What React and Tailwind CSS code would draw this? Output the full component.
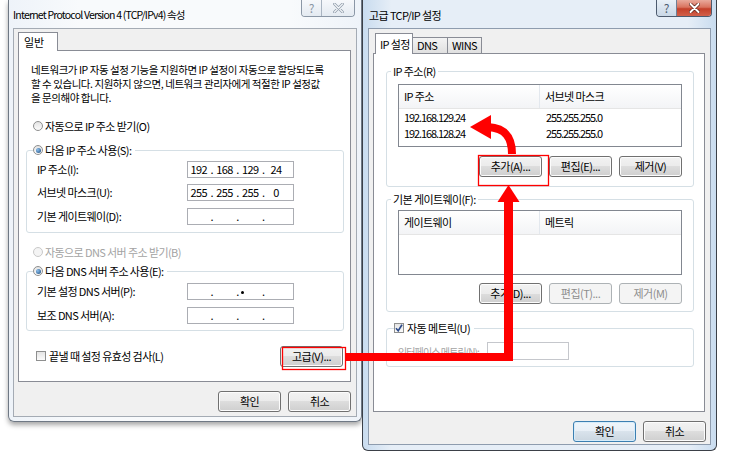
import React from 'react';
import clsx from 'clsx';

const FONT = "font-['Noto_Sans_CJK_KR','Noto_Sans',sans-serif]";

const Btn = ({ children, className, disabled, primary }) => (
  <div
    className={clsx(
      'flex h-[21px] w-[63px] shrink-0 items-center justify-center rounded-[3px] border text-[11px] tracking-[-0.5px]',
      disabled
        ? 'border-[#adb2b5] bg-[#f4f4f4] text-[#8d8d8d]'
        : primary
          ? 'border-[#3c7fb1] bg-[linear-gradient(#eef5fb_0%,#e8eff6_50%,#d9e3ec_50%,#cbd6e0_100%)] shadow-[inset_0_0_0_1px_#d6ecfa]'
          : 'border-[#707070] bg-[linear-gradient(#f2f2f2_0%,#ebebeb_50%,#dddddd_50%,#cfcfcf_100%)] shadow-[inset_0_0_0_1px_#fcfcfc]',
      className
    )}
  >
    {children}
  </div>
);

const Radio = ({ checked, disabled }) => (
  <span
    className={clsx(
      'flex h-[10px] w-[10px] shrink-0 items-center justify-center rounded-full border',
      disabled ? 'border-[#c9c9c9] bg-[#f4f4f4]' : 'border-[#8e8f8f] bg-[linear-gradient(#e4e4e4,#fbfbfb)]'
    )}
  >
    {checked && <span className="h-[5px] w-[5px] rounded-full bg-[radial-gradient(circle_at_35%_35%,#8cc0ee,#1b4a7c)]" />}
  </span>
);

const Check = ({ checked }) => (
  <span className="flex h-[10px] w-[10px] shrink-0 items-center justify-center border border-[#8e8f8f] bg-[linear-gradient(#e4e4e4,#fbfbfb)]">
    {checked && (
      <svg width="8" height="8" viewBox="0 0 8 8">
        <path d="M1 4.2 L3.2 6.8 L7 0.8" fill="none" stroke="#2b4a8a" strokeWidth="1.6" />
      </svg>
    )}
  </span>
);

const IpInput = ({ parts, caret }) => (
  <div className="flex h-[17px] w-[107px] items-center border border-[#abadb3] bg-white pr-[6px] text-[11px]">
    {parts.map((p, i) => (
      <React.Fragment key={i}>
        {i > 0 && (
          <span className="relative w-[4px] text-center">
            .
            {caret && i === 2 && <span className="absolute left-[5px] top-[8px] h-[3px] w-[3px] rounded-full bg-black" />}
          </span>
        )}
        <span className="flex-1 text-center">{p}</span>
      </React.Fragment>
    ))}
  </div>
);

const FieldRow = ({ label, parts, caret, className }) => (
  <div className={clsx('flex h-[17px] items-center pl-[10px]', className)}>
    <span className="w-[150px]">{label}</span>
    <IpInput parts={parts} caret={caret} />
  </div>
);

const CaptionButtons = ({ active, className }) => (
  <div className={clsx('flex h-[17px] overflow-hidden rounded-b-[4px] border border-t-0', active ? 'border-[#4c5a6e]' : 'border-[#8b97a6]', className)}>
    <div
      className={clsx(
        'flex w-[20px] items-center justify-center border-r text-[12px] leading-none',
        active ? 'border-[#6f7f95] bg-[linear-gradient(#e9f0f7,#c9d7e6)] text-[#4d5d72]' : 'border-[#a9b4c1] bg-[linear-gradient(#f6f8fb,#e4eaf1)] text-[#8a96a5]'
      )}
    >
      ?
    </div>
    <div
      className={clsx(
        'flex items-center justify-center',
        active ? 'w-[34px] bg-[linear-gradient(#e9a99b_0%,#d9735f_45%,#c4402a_55%,#d2604a_100%)]' : 'w-[32px] bg-[linear-gradient(#f6f8fb,#e4eaf1)]'
      )}
    >
      {active ? (
        <svg width="11" height="10" viewBox="0 0 11 10">
          <path d="M1.5 1 L9.5 9 M9.5 1 L1.5 9" stroke="#5a1f15" strokeWidth="3.4" strokeLinecap="round" />
          <path d="M1.5 1 L9.5 9 M9.5 1 L1.5 9" stroke="#ffffff" strokeWidth="2" strokeLinecap="round" />
        </svg>
      ) : (
        <svg width="11" height="10" viewBox="0 0 11 10">
          <path d="M1.5 1 L9.5 9 M9.5 1 L1.5 9" stroke="#8e9aa8" strokeWidth="2.6" strokeLinecap="round" />
          <path d="M1.5 1 L9.5 9 M9.5 1 L1.5 9" stroke="#f4f6f9" strokeWidth="1.2" strokeLinecap="round" />
        </svg>
      )}
    </div>
  </div>
);

const ListView = ({ cols, rows, className }) => (
  <div className={clsx('ml-[11px] w-[284px] border border-[#828790] bg-white', className)}>
    <div className="flex h-[24px] border-b border-[#e5e5e5] bg-[linear-gradient(#ffffff,#f3f4f6)]">
      <div className="flex w-[141px] items-center border-r border-[#e3e8ee] pl-[5px]">{cols[0]}</div>
      <div className="flex items-center pl-[5px]">{cols[1]}</div>
    </div>
    {rows.map((r) => (
      <div key={r[0]} className="flex h-[16px] items-center tracking-[-1.1px]">
        <div className="w-[142px] pl-[5px]">{r[0]}</div>
        <div className="pl-[5px]">{r[1]}</div>
      </div>
    ))}
  </div>
);

const LeftWindow = () => (
  <div className="flex h-[422px] w-[354px] shrink-0 flex-col rounded-b-[6px] border border-t-0 border-[#6f7884] bg-[linear-gradient(90deg,#eef3f9,#f8fafc_20%,#f8fafc_80%,#eef3f9)] shadow-[0_3px_5px_rgba(0,0,0,0.35)]">
    <div className="flex h-[28px] items-start">
      <span className="ml-[4px] mt-[8px] text-[10.5px] leading-[14px] tracking-[-0.8px]">Internet Protocol Version 4 (TCP/IPv4) 속성</span>
      <CaptionButtons className="ml-auto mr-[6px]" />
    </div>
    <div className="mx-[4px] mb-[4px] flex flex-1 flex-col border border-[#a4abb4] bg-[#f0f0f0] pl-[4px] pt-[3px]">
      <div className="flex">
        <div className="relative z-10 -mb-px flex h-[19px] w-[40px] items-center border border-b-0 border-[#898c95] bg-white pl-[5px] text-[11px]">
          일반
        </div>
      </div>
      <div className="flex h-[332px] w-[333px] flex-col border border-[#898c95] bg-white text-[11px] tracking-[-0.6px]">
        <div className="pl-[12px] pt-[12px] text-[10.5px] leading-[14px] tracking-[-0.45px]">
          <p>네트워크가 IP 자동 설정 기능을 지원하면 IP 설정이 자동으로 할당되도록</p>
          <p>할 수 있습니다. 지원하지 않으면, 네트워크 관리자에게 적절한 IP 설정값</p>
          <p>을 문의해야 합니다.</p>
        </div>
        <div className="mt-[14px] flex h-[14px] items-center gap-[2px] pl-[14px]">
          <Radio />
          <span>자동으로 IP 주소 받기(O)</span>
        </div>
        <fieldset className="ml-[7px] mt-[10px] w-[318px] rounded-[3px] border border-[#d5dfe5] pb-[7px]">
          <legend className="ml-[6px] flex h-[14px] items-center gap-[2px] pr-[4px]">
            <Radio checked />
            <span>다음 IP 주소 사용(S):</span>
          </legend>
          <FieldRow className="mt-[4px]" label="IP 주소(I):" parts={['192', '168', '129', '24']} />
          <FieldRow className="mt-[6px]" label="서브넷 마스크(U):" parts={['255', '255', '255', '0']} />
          <FieldRow className="mt-[7px]" label="기본 게이트웨이(D):" parts={['', '', '', '']} />
        </fieldset>
        <div className="mt-[12px] flex h-[14px] items-center gap-[2px] pl-[14px] text-[#a3a3a3]">
          <Radio disabled />
          <span>자동으로 DNS 서버 주소 받기(B)</span>
        </div>
        <fieldset className="ml-[7px] mt-[5px] w-[318px] rounded-[3px] border border-[#d5dfe5] pb-[6px]">
          <legend className="ml-[6px] flex h-[14px] items-center gap-[2px] pr-[4px]">
            <Radio checked />
            <span>다음 DNS 서버 주소 사용(E):</span>
          </legend>
          <FieldRow className="mt-[5px]" label="기본 설정 DNS 서버(P):" parts={['', '', '', '']} caret />
          <FieldRow className="mt-[7px]" label="보조 DNS 서버(A):" parts={['', '', '', '']} />
        </fieldset>
        <div className="mt-[14px] flex h-[22px] items-center pl-[17px] pr-[7px]">
          <Check />
          <span className="ml-[3px]">끝낼 때 설정 유효성 검사(L)</span>
          <Btn className="ml-auto h-[20px] w-[60px]">고급(V)...</Btn>
        </div>
      </div>
      <div className="mt-[9px] flex w-[333px] justify-end gap-[7px]">
        <Btn>확인</Btn>
        <Btn>취소</Btn>
      </div>
    </div>
  </div>
);

const RightWindow = () => (
  <div className="flex h-[451px] w-[355px] shrink-0 flex-col rounded-b-[6px] border border-t-0 border-[#3b4048] bg-[linear-gradient(90deg,#c9dcef,#e6eef7_8%,#e6eef7_92%,#c9dcef)]">
    <div className="flex h-[28px] items-start">
      <span className="ml-[6px] mt-[8px] text-[11px] leading-[14px] tracking-[-0.6px]">고급 TCP/IP 설정</span>
      <CaptionButtons active className="ml-auto mr-[4px]" />
    </div>
    <div className="mx-[5px] mb-[5px] flex flex-1 flex-col border border-[#8e9cae] bg-[#f0f0f0] pl-[4px] pt-[4px] text-[11px] tracking-[-0.6px]">
      <div className="ml-[2px] flex items-end">
        <div className="relative z-10 -mb-px flex h-[21px] w-[38px] items-center border border-b-0 border-[#898c95] bg-white pl-[4px]">IP 설정</div>
        <div className="flex h-[16px] w-[35px] items-center border border-b-0 border-l-0 border-[#898c95] bg-[linear-gradient(#f3f3f3,#e0e0e0)] pl-[4px]">DNS</div>
        <div className="flex h-[16px] w-[34px] items-center border border-b-0 border-l-0 border-[#898c95] bg-[linear-gradient(#f3f3f3,#e0e0e0)] pl-[4px]">WINS</div>
      </div>
      <div className="flex h-[359px] w-[332px] flex-col border border-[#898c95] bg-white">
        <fieldset className="ml-[12px] mt-[10px] w-[308px] rounded-[3px] border border-[#d5dfe5] pb-[9px]">
          <legend className="ml-[4px] h-[14px] px-[2px] leading-[14px]">IP 주소(R)</legend>
          <ListView
            className="mt-[6px] h-[63px]"
            cols={['IP 주소', '서브넷 마스크']}
            rows={[
              ['192.168.129.24', '255.255.255.0'],
              ['192.168.128.24', '255.255.255.0'],
            ]}
          />
          <div className="mt-[9px] flex gap-[7px] pl-[92px]">
            <Btn>추가(A)...</Btn>
            <Btn>편집(E)...</Btn>
            <Btn>제거(V)</Btn>
          </div>
        </fieldset>
        <fieldset className="ml-[12px] mt-[5px] w-[308px] rounded-[3px] border border-[#d5dfe5] pb-[7px]">
          <legend className="ml-[4px] h-[14px] px-[2px] leading-[14px]">기본 게이트웨이(F):</legend>
          <ListView className="mt-[4px] h-[65px]" cols={['게이트웨이', '메트릭']} rows={[]} />
          <div className="mt-[8px] flex gap-[7px] pl-[92px]">
            <Btn>추가(D)...</Btn>
            <Btn disabled>편집(T)...</Btn>
            <Btn disabled>제거(M)</Btn>
          </div>
        </fieldset>
        <fieldset className="ml-[12px] mt-[9px] w-[308px] rounded-[3px] border border-[#d5dfe5] pb-[6px]">
          <legend className="ml-[7px] flex h-[14px] items-center gap-[3px] pr-[4px]">
            <Check checked />
            <span>자동 메트릭(U)</span>
          </legend>
          <div className="mt-[7px] flex h-[18px] items-center pl-[11px] text-[#a3a3a3]">
            <span className="w-[89px] whitespace-nowrap text-[10px] tracking-[-0.9px]">인터페이스 메트릭(N):</span>
            <div className="h-[18px] w-[82px] shrink-0 border border-[#c5c7cc] bg-white" />
          </div>
        </fieldset>
      </div>
      <div className="mt-[9px] flex w-[333px] justify-end gap-[7px]">
        <Btn primary>확인</Btn>
        <Btn>취소</Btn>
      </div>
    </div>
  </div>
);

const Arrows = () => (
  <svg className="pointer-events-none absolute left-0 top-0" width="741" height="459" viewBox="0 0 741 459">
    <rect x="282.5" y="347.5" width="63" height="22" fill="none" stroke="#ff0000" strokeWidth="1.3" />
    <rect x="478.5" y="155.5" width="70" height="30" fill="none" stroke="#ff0000" strokeWidth="1.3" />
    <rect x="346" y="353" width="167" height="8" fill="#ff0000" />
    <rect x="504" y="200" width="9" height="161" fill="#ff0000" />
    <polygon points="497.5,202 519.5,202 508.5,185" fill="#ff0000" />
    <path d="M512 154 C512 138 506 128 488 127" fill="none" stroke="#ff0000" strokeWidth="8" />
    <polygon points="470,127 491,115 491,139" fill="#ff0000" />
  </svg>
);

export default function App() {
  return (
    <div className={clsx('relative flex h-[459px] w-[741px] items-start overflow-hidden bg-white pl-[8px] text-black', FONT)}>
      <LeftWindow />
      <RightWindow />
      <Arrows />
    </div>
  );
}
